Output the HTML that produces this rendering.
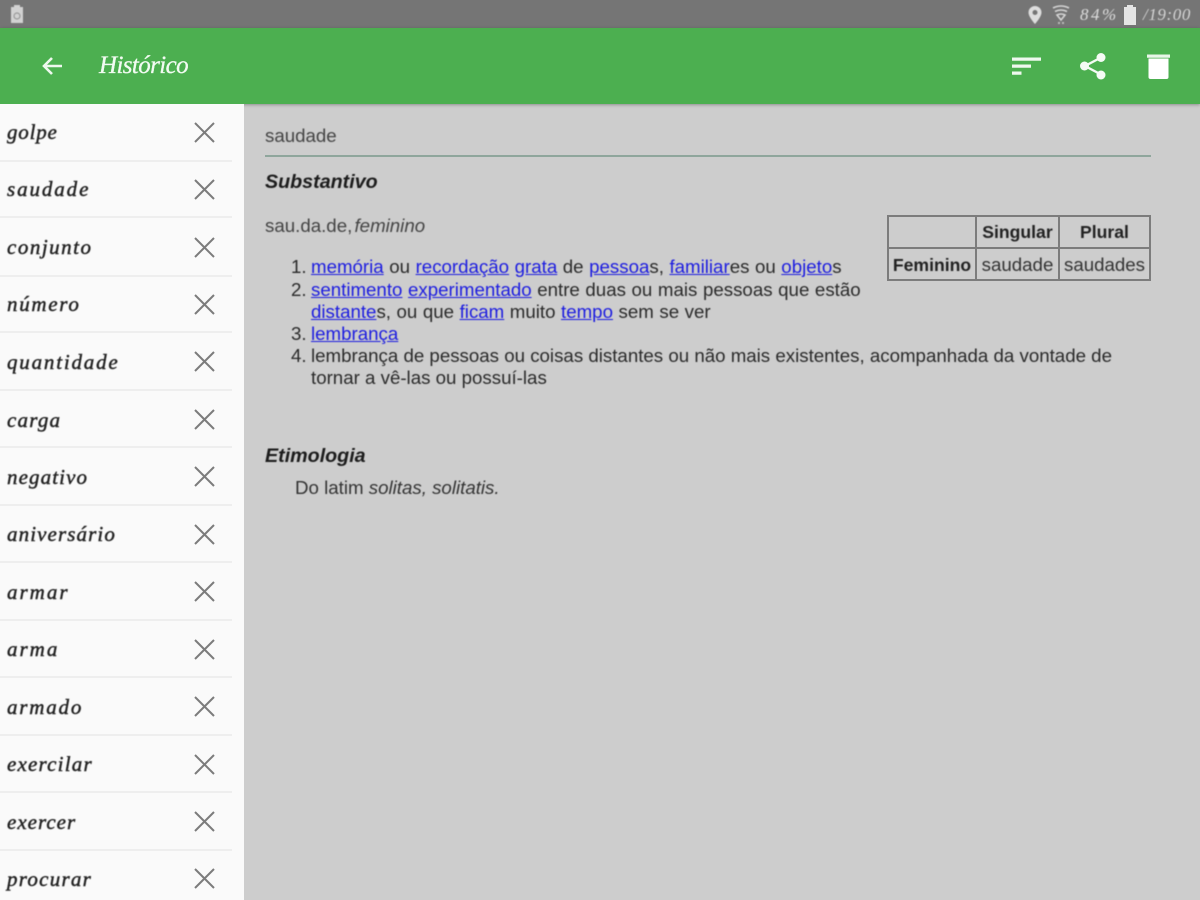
<!DOCTYPE html>
<html lang="pt"><head><meta charset="utf-8"><title>Histórico</title>
<style>
html,body{margin:0;padding:0}
body{width:1200px;height:900px;position:relative;overflow:hidden;background:#cdcdcd;font-family:"Liberation Sans",sans-serif;color:#222}
.a{position:absolute;white-space:nowrap}
#status{left:0;top:0;width:1200px;height:28px;background:#757575}
#bar{left:0;top:28px;width:1200px;height:76px;background:#4caf50;box-shadow:0 1px 3px rgba(0,0,0,.3)}
#side{left:0;top:104px;width:244px;height:796px;background:#fafafa}
.div{position:absolute;left:0;width:232px;height:2px;background:#eee}
.w{position:absolute;left:7px;font:italic 21px/24px "Liberation Serif",serif;color:#222;white-space:nowrap;-webkit-text-stroke:.45px #222;filter:blur(.4px)}
.x{position:absolute;left:194px;width:21px;height:21px}
.t{font-size:18.7px;line-height:22px;color:#2a2a2a;filter:blur(.5px)}
a{color:#1c1ce0;text-decoration:underline}
#tb{left:887px;top:215px;width:264px;height:66px;border:2px solid #7c7c7c;box-sizing:border-box}
.tc{position:absolute;font-size:18.7px;line-height:22px;white-space:nowrap;filter:blur(.5px);text-align:center}
.tc.b{font-size:17.6px;font-weight:bold}
</style></head><body>
<div class="a" id="status"></div>
<svg class="a" style="left:8px;top:4px;filter:blur(.5px)" width="18" height="20" viewBox="0 0 18 20"><path d="M3 3h3V1h6v2h3v16H3z" fill="#d2d2d2"/><circle cx="9" cy="12" r="3" fill="none" stroke="#999" stroke-width="1.2"/></svg>
<svg class="a" style="left:1027px;top:5px;filter:blur(.4px)" width="16" height="20" viewBox="0 0 16 20"><path d="M8 1a6.500 6.500 0 0 0-6.500 6.500C1.500 12 8 19 8 19s6.500-7 6.500-11.500A6.500 6.500 0 0 0 8 1z" fill="#ddd"/><circle cx="8" cy="7.500" r="2.500" fill="#757575"/></svg>
<svg class="a" style="left:1052px;top:5px;filter:blur(.5px)" width="18" height="20" viewBox="0 0 18 20"><path d="M1 3q8-4 16 0M3 6.500q6-3 12 0M5 10q4-2 8 0L9 15z" fill="none" stroke="#d5d5d5" stroke-width="1.600"/><path d="M6 17h2v2H6zM10 17h2v2h-2z" fill="#bbb"/></svg>
<div class="a" style="left:1080px;top:5px;font:italic 17px/20px 'Liberation Serif',serif;color:#ddd;letter-spacing:2.500px;filter:blur(.5px)">84%</div>
<svg class="a" style="left:1123px;top:3px" width="14" height="22" viewBox="0 0 14 22"><path d="M1 4h3V2h6v2h3v18H1z" fill="#e4e4e4"/></svg>
<div class="a" style="left:1143px;top:5px;font:italic 17px/20px 'Liberation Serif',serif;color:#d5d5d5;letter-spacing:.6px;filter:blur(.5px)">/19:00</div>

<div class="a" id="bar"></div>
<svg class="a" style="left:40px;top:54px" width="24" height="24" viewBox="0 0 24 24"><path d="M22 12H5M12 4l-8 8 8 8" fill="none" stroke="#eef8ee" stroke-width="2.600"/></svg>
<div class="a" style="left:99px;top:51px;font:italic 25px/30px 'Liberation Serif',serif;color:#f2fbf2;letter-spacing:-.6px;-webkit-text-stroke:.3px #f2fbf2;filter:blur(.3px)">Histórico</div>
<svg class="a" style="left:1012px;top:56px" width="30" height="20" viewBox="0 0 30 20"><path d="M0 1.500h29v3.200H0zM0 8.500h19v3.200H0zM0 15.500h9.500v3.200H0z" fill="#eef8ee"/></svg>
<svg class="a" style="left:1078px;top:51px" width="30" height="30" viewBox="0 0 30 30"><path d="M23 6.500 7 15l16 8.500" fill="none" stroke="#f5fbf5" stroke-width="2.400"/><circle cx="23" cy="6.500" r="4.500" fill="#f5fbf5"/><circle cx="6.500" cy="15" r="4.500" fill="#f5fbf5"/><circle cx="23" cy="24" r="4.500" fill="#f5fbf5"/></svg>
<svg class="a" style="left:1146px;top:52px" width="25" height="28" viewBox="0 0 25 28"><path d="M1 2.500h23v3.200H1z" fill="#e8f6e8"/><path d="M2.500 6.500h20v18.500a2 2 0 0 1-2 2h-16a2 2 0 0 1-2-2z" fill="#fff"/></svg>

<div class="a" id="side">
<div class="w" style="top:16px;letter-spacing:.8px">golpe</div><svg class="x" style="top:18px" viewBox="0 0 21 21"><path d="M1 1l19 19M20 1 1 20" stroke="#7c7c7c" stroke-width="2" fill="none"/></svg><div class="div" style="top:56px"></div>
<div class="w" style="top:73px;letter-spacing:1.9px">saudade</div><svg class="x" style="top:75px" viewBox="0 0 21 21"><path d="M1 1l19 19M20 1 1 20" stroke="#7c7c7c" stroke-width="2" fill="none"/></svg><div class="div" style="top:112px"></div>
<div class="w" style="top:131px;letter-spacing:1.5px">conjunto</div><svg class="x" style="top:133px" viewBox="0 0 21 21"><path d="M1 1l19 19M20 1 1 20" stroke="#7c7c7c" stroke-width="2" fill="none"/></svg><div class="div" style="top:171px"></div>
<div class="w" style="top:188px;letter-spacing:1.700px">número</div><svg class="x" style="top:190px" viewBox="0 0 21 21"><path d="M1 1l19 19M20 1 1 20" stroke="#7c7c7c" stroke-width="2" fill="none"/></svg><div class="div" style="top:227px"></div>
<div class="w" style="top:246px;letter-spacing:1.800px">quantidade</div><svg class="x" style="top:247px" viewBox="0 0 21 21"><path d="M1 1l19 19M20 1 1 20" stroke="#7c7c7c" stroke-width="2" fill="none"/></svg><div class="div" style="top:285px"></div>
<div class="w" style="top:304px;letter-spacing:1.200px">carga</div><svg class="x" style="top:305px" viewBox="0 0 21 21"><path d="M1 1l19 19M20 1 1 20" stroke="#7c7c7c" stroke-width="2" fill="none"/></svg><div class="div" style="top:342px"></div>
<div class="w" style="top:361px;letter-spacing:1.100px">negativo</div><svg class="x" style="top:362px" viewBox="0 0 21 21"><path d="M1 1l19 19M20 1 1 20" stroke="#7c7c7c" stroke-width="2" fill="none"/></svg><div class="div" style="top:400px"></div>
<div class="w" style="top:418px;letter-spacing:1.100px">aniversário</div><svg class="x" style="top:420px" viewBox="0 0 21 21"><path d="M1 1l19 19M20 1 1 20" stroke="#7c7c7c" stroke-width="2" fill="none"/></svg><div class="div" style="top:457px"></div>
<div class="w" style="top:476px;letter-spacing:2px">armar</div><svg class="x" style="top:477px" viewBox="0 0 21 21"><path d="M1 1l19 19M20 1 1 20" stroke="#7c7c7c" stroke-width="2" fill="none"/></svg><div class="div" style="top:515px"></div>
<div class="w" style="top:533px;letter-spacing:2px">arma</div><svg class="x" style="top:535px" viewBox="0 0 21 21"><path d="M1 1l19 19M20 1 1 20" stroke="#7c7c7c" stroke-width="2" fill="none"/></svg><div class="div" style="top:572px"></div>
<div class="w" style="top:591px;letter-spacing:1.800px">armado</div><svg class="x" style="top:592px" viewBox="0 0 21 21"><path d="M1 1l19 19M20 1 1 20" stroke="#7c7c7c" stroke-width="2" fill="none"/></svg><div class="div" style="top:630px"></div>
<div class="w" style="top:648px;letter-spacing:1.200px">exercilar</div><svg class="x" style="top:650px" viewBox="0 0 21 21"><path d="M1 1l19 19M20 1 1 20" stroke="#7c7c7c" stroke-width="2" fill="none"/></svg><div class="div" style="top:687px"></div>
<div class="w" style="top:706px;letter-spacing:1px">exercer</div><svg class="x" style="top:707px" viewBox="0 0 21 21"><path d="M1 1l19 19M20 1 1 20" stroke="#7c7c7c" stroke-width="2" fill="none"/></svg><div class="div" style="top:745px"></div>
<div class="w" style="top:763px;letter-spacing:1.250px">procurar</div><svg class="x" style="top:764px" viewBox="0 0 21 21"><path d="M1 1l19 19M20 1 1 20" stroke="#7c7c7c" stroke-width="2" fill="none"/></svg>
</div>

<div class="a t" style="left:265px;top:125px;color:#444">saudade</div>
<div class="a" style="left:265px;top:155px;width:886px;height:1.500px;background:#8fa69c"></div>
<div class="a t" style="left:265px;top:171px;font-size:19.700px;font-weight:bold;font-style:italic;color:#1c1c1c">Substantivo</div>
<div class="a t" style="left:265px;top:215px;color:#444">sau.da.de, <i style="margin-left:-3px">feminino</i></div>

<div class="a t" style="left:291px;top:256px">1.</div>
<div class="a t" style="left:311px;top:256px;word-spacing:.35px"><a>memória</a> ou <a>recordação</a> <a>grata</a> de <a>pessoa</a>s, <a>familiar</a>es ou <a>objeto</a>s</div>
<div class="a t" style="left:291px;top:279px">2.</div>
<div class="a t" style="left:311px;top:279px;word-spacing:.4px"><a>sentimento</a> <a>experimentado</a> entre duas ou mais pessoas que estão</div>
<div class="a t" style="left:311px;top:301px;word-spacing:.35px"><a>distante</a>s, ou que <a>ficam</a> muito <a>tempo</a> sem se ver</div>
<div class="a t" style="left:291px;top:323px">3.</div>
<div class="a t" style="left:311px;top:323px"><a>lembrança</a></div>
<div class="a t" style="left:291px;top:345px">4.</div>
<div class="a t" style="left:311px;top:345px">lembrança de pessoas ou coisas distantes ou não mais existentes, acompanhada da vontade de</div>
<div class="a t" style="left:311px;top:367px">tornar a vê-las ou possuí-las</div>

<div class="a t" style="left:265px;top:445px;font-size:19.700px;font-weight:bold;font-style:italic;color:#1c1c1c">Etimologia</div>
<div class="a t" style="left:295px;top:477px;color:#333">Do latim <i>solitas, solitatis.</i></div>

<div class="a" id="tb"></div>
<div class="a" style="left:887px;top:247px;width:264px;height:2px;background:#7c7c7c"></div>
<div class="a" style="left:975px;top:215px;width:2px;height:66px;background:#7c7c7c"></div>
<div class="a" style="left:1058px;top:215px;width:2px;height:66px;background:#7c7c7c"></div>
<div class="tc b" style="left:977px;top:221px;width:81px">Singular</div>
<div class="tc b" style="left:1060px;top:221px;width:89px">Plural</div>
<div class="tc b" style="left:889px;top:254px;width:86px">Feminino</div>
<div class="tc" style="left:977px;top:254px;width:81px;color:#333">saudade</div>
<div class="tc" style="left:1060px;top:254px;width:89px;color:#333">saudades</div>
</body></html>
